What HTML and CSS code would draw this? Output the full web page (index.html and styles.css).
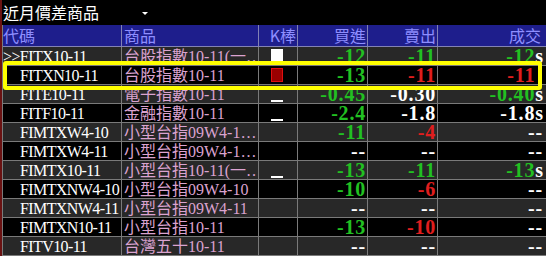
FILE: index.html
```html
<!DOCTYPE html>
<html lang="zh-Hant">
<head>
<meta charset="utf-8">
<link rel="stylesheet" href="styles.css">
</head>
<body>
<div class="win">
  <div class="title"><span class="title-text">近月價差商品</span><span class="caret"></span></div>
  <div class="grid">
    <div class="row head">
      <div class="c code">代碼</div>
      <div class="c name">商品</div>
      <div class="c k">K棒</div>
      <div class="c num">買進</div>
      <div class="c num">賣出</div>
      <div class="c num last">成交</div>
    </div>
    <div class="row alt">
      <div class="c code"><span class="mark">&gt;&gt;</span>FITX10-11</div>
      <div class="c name">台股指數10-11(一…</div>
      <div class="c k"><span class="bar up"></span></div>
      <div class="c num g">-12</div>
      <div class="c num g">-11</div>
      <div class="c num last g">-12<span class="s">s</span></div>
    </div>
    <div class="row">
      <div class="c code">FITXN10-11</div>
      <div class="c name">台股指數10-11</div>
      <div class="c k"><span class="bar down"></span></div>
      <div class="c num g">-13</div>
      <div class="c num r">-11</div>
      <div class="c num last r">-11<span class="s hide">s</span></div>
    </div>
    <div class="row alt">
      <div class="c code">FITE10-11</div>
      <div class="c name">電子指數10-11</div>
      <div class="c k"><span class="bar doji"></span></div>
      <div class="c num g">-0.45</div>
      <div class="c num w">-0.30</div>
      <div class="c num last g">-0.40<span class="s">s</span></div>
    </div>
    <div class="row">
      <div class="c code">FITF10-11</div>
      <div class="c name">金融指數10-11</div>
      <div class="c k"><span class="bar doji"></span></div>
      <div class="c num g">-2.4</div>
      <div class="c num w">-1.8</div>
      <div class="c num last w">-1.8<span class="s">s</span></div>
    </div>
    <div class="row alt">
      <div class="c code">FIMTXW4-10</div>
      <div class="c name">小型台指09W4-1…</div>
      <div class="c k"></div>
      <div class="c num g">-11</div>
      <div class="c num r">-4</div>
      <div class="c num last w">--</div>
    </div>
    <div class="row">
      <div class="c code">FIMTXW4-11</div>
      <div class="c name">小型台指09W4-1…</div>
      <div class="c k"></div>
      <div class="c num w">--</div>
      <div class="c num w">--</div>
      <div class="c num last w">--</div>
    </div>
    <div class="row alt">
      <div class="c code">FIMTX10-11</div>
      <div class="c name">小型台指10-11(一…</div>
      <div class="c k"><span class="bar doji"></span></div>
      <div class="c num g">-13</div>
      <div class="c num g">-11</div>
      <div class="c num last g">-13<span class="s">s</span></div>
    </div>
    <div class="row">
      <div class="c code">FIMTXNW4-10</div>
      <div class="c name">小型台指09W4-10</div>
      <div class="c k"></div>
      <div class="c num g">-10</div>
      <div class="c num r">-6</div>
      <div class="c num last w">--</div>
    </div>
    <div class="row alt">
      <div class="c code">FIMTXNW4-11</div>
      <div class="c name">小型台指09W4-11</div>
      <div class="c k"></div>
      <div class="c num w">--</div>
      <div class="c num w">--</div>
      <div class="c num last w">--</div>
    </div>
    <div class="row">
      <div class="c code">FIMTXN10-11</div>
      <div class="c name">小型台指10-11</div>
      <div class="c k"></div>
      <div class="c num g">-13</div>
      <div class="c num r">-10</div>
      <div class="c num last w">--</div>
    </div>
    <div class="row alt">
      <div class="c code">FITV10-11</div>
      <div class="c name">台灣五十10-11</div>
      <div class="c k"></div>
      <div class="c num w">--</div>
      <div class="c num w">--</div>
      <div class="c num last w">--</div>
    </div>
  </div>
  <div class="focus"></div>
</div>
</body>
</html>
```
FILE: styles.css
```css
html, body {
  margin: 0;
  padding: 0;
  background: #000;
}
body {
  width: 546px;
  height: 256px;
  overflow: hidden;
}
.win {
  position: relative;
  box-sizing: border-box;
  height: 256px;
  border-left: 2px solid #6a1212;
  font-family: "Liberation Serif", "Noto Sans CJK TC", serif;
}
.title {
  height: 25px;
  display: flex;
  align-items: center;
  padding-left: 1px;
  color: #fff;
  font: 16px/25px "Noto Sans CJK TC", sans-serif;
}
.caret {
  margin-left: 43px;
  margin-top: 2px;
  width: 0;
  height: 0;
  border-left: 3px solid transparent;
  border-right: 3px solid transparent;
  border-top: 3px solid #fff;
}
.grid {
  border-left: 1px solid #7a7a7a;
}
.row {
  display: grid;
  grid-template-columns: 119px 137px 39px 70px 70px 1fr;
  box-sizing: border-box;
  height: 19px;
  border-bottom: 1px solid #7a7a7a;
  background: #000;
}
.row.alt {
  background: #282828;
}
.c {
  box-sizing: border-box;
  border-right: 1px solid #7a7a7a;
  overflow: hidden;
  white-space: nowrap;
  line-height: 19px;
}
.c.last {
  border-right: none;
}
.code {
  padding-left: 17px;
  color: #fff;
  font-size: 16px;
  letter-spacing: -0.6px;
}
.mark {
  margin-left: -17px;
}
.name {
  padding-left: 2px;
  color: #dba3d0;
  font-size: 16px;
}
.k {
  padding-left: 12px;
}
.bar {
  display: block;
  width: 12px;
}
.bar.up {
  margin-top: 2px;
  height: 14px;
  background: #fff;
}
.bar.down {
  margin-top: 2px;
  height: 14px;
  box-sizing: border-box;
  background: #9a0000;
  border: 1px solid #e01010;
}
.bar.doji {
  margin-top: 15px;
  height: 2px;
  background: #fff;
}
.num {
  text-align: right;
  padding-right: 1px;
  font-size: 20px;
  font-weight: bold;
  letter-spacing: 0.8px;
  line-height: 18px;
}
.num.last {
  padding-right: 3px;
}
.g { color: #22c022; }
.r { color: #e01e1e; }
.w { color: #fff; }
.s {
  color: #fff;
  letter-spacing: 0;
}
.s.hide {
  visibility: hidden;
}
.row.head {
  height: 22px;
  background: #1e1e8c;
  border-bottom-color: #8282b4;
}
.row.head .c {
  border-right-color: #8282b4;
  color: #8e8eff;
  font: 16px/21px "Noto Sans CJK TC", sans-serif;
  letter-spacing: 0;
}
.row.head .code {
  padding-left: 0;
}
.row.head .k {
  padding-left: 0;
  text-align: right;
  padding-right: 1px;
}
.row.head .num {
  padding-right: 1px;
}
.row.head .num.last {
  padding-right: 5px;
}
.focus {
  position: absolute;
  left: 1px;
  top: 61px;
  width: 539px;
  height: 29px;
  box-sizing: border-box;
  border: 4px solid #ffff00;
  border-radius: 3px;
}
```
